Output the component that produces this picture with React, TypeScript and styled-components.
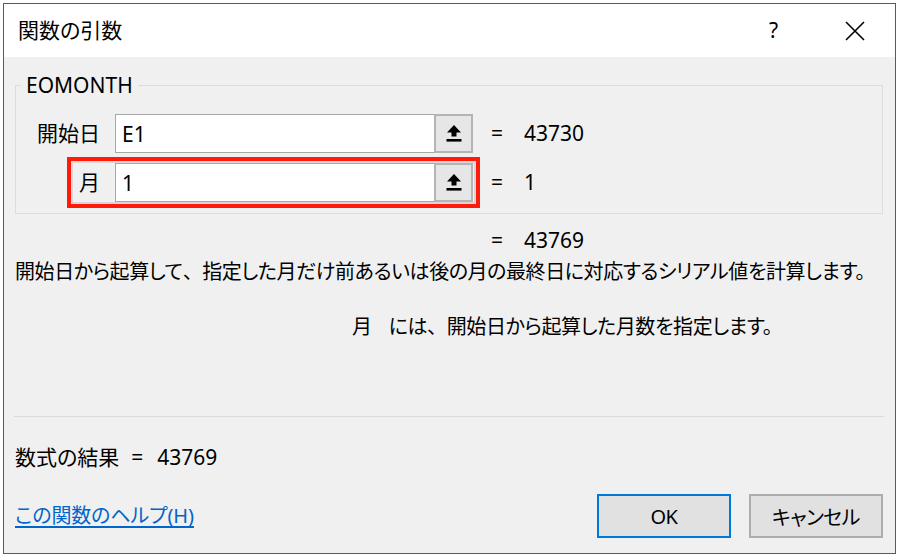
import React from 'react';
import styled, { createGlobalStyle } from 'styled-components';

const GlobalStyle = createGlobalStyle`
  html, body {
    margin: 0;
    padding: 0;
    background: #ffffff;
  }

  body {
    font-family: "Noto Sans", "Noto Sans CJK JP", sans-serif;
    font-feature-settings: "palt";
    color: #000000;
  }
`;

type Arg = {
  label: string;
  value: string;
  result: string;
  focused?: boolean;
};

const args: Arg[] = [
  { label: '開始日', value: 'E1', result: '43730' },
  { label: '月', value: '1', result: '1', focused: true },
];

const UploadIcon = () => (
  <svg width="16" height="19" viewBox="0 0 16 19">
    <path d="M8 1 L15 8.5 H10.5 V12.5 H5.5 V8.5 H1 Z" fill="#000" />
    <rect x="0.5" y="15" width="15" height="2.6" fill="#000" />
  </svg>
);

const CloseIcon = () => (
  <svg width="20" height="20" viewBox="0 0 20 20">
    <path d="M1 1 L19 19 M19 1 L1 19" stroke="#000" strokeWidth="1.6" fill="none" />
  </svg>
);

const App = () => {
  return (
    <>
      <GlobalStyle />
      <S.Screen>
        <S.Window>
          <S.TitleBar>
            <S.Title>関数の引数</S.Title>
            <S.TitleActions>
              <S.HelpGlyph>?</S.HelpGlyph>
              <S.CloseButton>
                <CloseIcon />
              </S.CloseButton>
            </S.TitleActions>
          </S.TitleBar>

          <S.Body>
            <S.GroupBox>
              <S.Legend>EOMONTH</S.Legend>
              <S.Rows>
                {args.map((arg) => (
                  <S.ArgRow key={arg.label}>
                    {arg.focused && <S.Highlight />}
                    <S.ArgLabel>{arg.label}</S.ArgLabel>
                    <S.ArgInput>{arg.value}</S.ArgInput>
                    <S.RefButton>
                      <UploadIcon />
                    </S.RefButton>
                    <S.Equals>=</S.Equals>
                    <S.Value>{arg.result}</S.Value>
                  </S.ArgRow>
                ))}
              </S.Rows>
            </S.GroupBox>

            <S.ResultLine>
              <S.Equals>=</S.Equals>
              <S.Value>43769</S.Value>
            </S.ResultLine>

            <S.Description>
              開始日から起算して<S.FullComma>、</S.FullComma>指定した月だけ前あるいは後の月の最終日に対応するシリアル値を計算します。
            </S.Description>

            <S.ParamDescription>
              <S.ParamName>月</S.ParamName>
              には<S.FullComma>、</S.FullComma>開始日から起算した月数を指定します。
            </S.ParamDescription>

            <S.Separator />

            <S.FormulaResult>
              <span>数式の結果</span>
              <S.FormulaEquals>=</S.FormulaEquals>
              <span>43769</span>
            </S.FormulaResult>

            <S.Footer>
              <S.HelpLink href="#">この関数のヘルプ(H)</S.HelpLink>
              <S.ButtonGroup>
                <S.DialogButton $primary>OK</S.DialogButton>
                <S.DialogButton>キャンセル</S.DialogButton>
              </S.ButtonGroup>
            </S.Footer>
          </S.Body>
        </S.Window>
      </S.Screen>
    </>
  );
};

export default App;

const S = {
  Screen: styled.div`
    width: 900px;
    height: 557px;
    padding: 3px 0 0 3px;
    box-sizing: border-box;
    background: #ffffff;
  `,

  Window: styled.div`
    display: flex;
    flex-direction: column;

    width: 893px;
    height: 551px;
    box-sizing: border-box;

    border: 1px solid #5a5a5a;
    background: #f0f0f0;
  `,

  TitleBar: styled.div`
    display: flex;
    justify-content: space-between;
    align-items: center;

    height: 53px;
    padding-left: 14px;
    flex-shrink: 0;

    background: #ffffff;
  `,

  Title: styled.div`
    font-size: 21px;
    line-height: 1;
    margin-top: -1px;
  `,

  TitleActions: styled.div`
    display: flex;
    align-items: center;
    gap: 67px;
    padding-right: 30px;
  `,

  HelpGlyph: styled.span`
    font-size: 21px;
    line-height: 1;
  `,

  CloseButton: styled.span`
    display: flex;
    width: 20px;
    height: 20px;
  `,

  Body: styled.div`
    display: flex;
    flex-direction: column;
    flex: 1;

    padding: 0 12px 0 11px;
  `,

  GroupBox: styled.fieldset`
    margin: 18px 0 0 0;
    padding: 18px 0 11px 0;

    border: 1px solid #dcdcdc;
  `,

  Legend: styled.legend`
    margin-left: 5px;
    padding: 0 5px;

    font-size: 21px;
    line-height: 21px;
  `,

  Rows: styled.div`
    display: flex;
    flex-direction: column;
    gap: 10px;
  `,

  ArgRow: styled.div`
    position: relative;
    display: flex;
    align-items: center;

    height: 39px;
  `,

  Highlight: styled.div`
    position: absolute;
    left: 51px;
    top: -6px;

    width: 413px;
    height: 51px;
    box-sizing: border-box;

    border: 4px solid #ff1a0a;
    box-shadow: inset 0 0 0 2px #d6d6d6;
    pointer-events: none;
  `,

  ArgLabel: styled.div`
    width: 84px;
    margin-right: 15px;

    text-align: right;
    font-size: 21px;
    line-height: 1;
  `,

  ArgInput: styled.div`
    display: flex;
    align-items: center;

    width: 319px;
    height: 39px;
    box-sizing: border-box;
    padding-left: 6px;

    border: 1px solid #a8a8a8;
    border-right: none;
    background: #ffffff;

    font-size: 21px;
  `,

  RefButton: styled.div`
    display: flex;
    justify-content: center;
    align-items: center;

    width: 39px;
    height: 39px;
    box-sizing: border-box;

    border: 2px solid #b4b4b4;
    background: #e6e6e6;
  `,

  Equals: styled.span`
    margin-left: 18px;
    width: 33px;

    font-size: 21px;
    line-height: 1;
  `,

  Value: styled.span`
    font-size: 21px;
    line-height: 1;
  `,

  ResultLine: styled.div`
    display: flex;
    align-items: center;

    height: 26px;
    margin-top: 13px;
    padding-left: 458px;
  `,

  Description: styled.div`
    height: 26px;
    margin-top: 6px;

    font-size: 20px;
    line-height: 26px;
    letter-spacing: -0.42px;
    white-space: nowrap;
  `,

  FullComma: styled.span`
    font-feature-settings: normal;
  `,

  ParamDescription: styled.div`
    height: 26px;
    margin-top: 29px;
    padding-left: 337px;

    font-size: 20px;
    line-height: 26px;
    letter-spacing: -0.4px;
    white-space: nowrap;
  `,

  ParamName: styled.span`
    margin-right: 17px;
  `,

  Separator: styled.div`
    height: 1px;
    margin: 76px -1px 0 -1px;

    background: #dadada;
  `,

  FormulaResult: styled.div`
    display: flex;
    align-items: center;
    gap: 12px;

    height: 26px;
    margin-top: 27px;

    font-size: 21px;
    line-height: 26px;
  `,

  FormulaEquals: styled.span`
    margin-right: 2px;
  `,

  Footer: styled.div`
    display: flex;
    justify-content: space-between;
    align-items: center;

    margin-top: 24px;
  `,

  HelpLink: styled.a`
    font-size: 20px;
    line-height: 1;
    letter-spacing: -0.1px;
    color: #0066cc;
    text-decoration: underline;
    text-underline-offset: 3px;
  `,

  ButtonGroup: styled.div`
    display: flex;
    gap: 18px;
  `,

  DialogButton: styled.button<{ $primary?: boolean }>`
    width: 134px;
    height: 44px;
    box-sizing: border-box;
    padding: 0;

    border: ${({ $primary }) => ($primary ? '2px solid #0078d7' : '2px solid #adadad')};
    background: #e1e1e1;

    font-family: "Noto Sans", "Noto Sans CJK JP", sans-serif;
    font-feature-settings: "palt";
    font-size: 20px;
    letter-spacing: -0.5px;
    color: #000000;
  `,
};
